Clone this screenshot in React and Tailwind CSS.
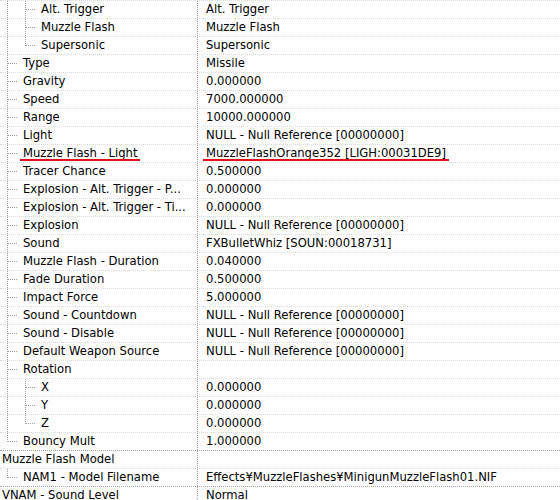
import React from 'react';

// guide codes per depth level: '|' pass-through, '+' tee, 'L' last child
const rows = [
  { name: 'Alt. Trigger', value: 'Alt. Trigger', guides: '|+' },
  { name: 'Muzzle Flash', value: 'Muzzle Flash', guides: '|+' },
  { name: 'Supersonic', value: 'Supersonic', guides: '|L' },
  { name: 'Type', value: 'Missile', guides: '+' },
  { name: 'Gravity', value: '0.000000', guides: '+' },
  { name: 'Speed', value: '7000.000000', guides: '+' },
  { name: 'Range', value: '10000.000000', guides: '+' },
  { name: 'Light', value: 'NULL - Null Reference [00000000]', guides: '+' },
  { name: 'Muzzle Flash - Light', value: 'MuzzleFlashOrange352 [LIGH:00031DE9]', guides: '+', marked: true },
  { name: 'Tracer Chance', value: '0.500000', guides: '+' },
  { name: 'Explosion - Alt. Trigger - P...', value: '0.000000', guides: '+' },
  { name: 'Explosion - Alt. Trigger - Ti...', value: '0.000000', guides: '+' },
  { name: 'Explosion', value: 'NULL - Null Reference [00000000]', guides: '+' },
  { name: 'Sound', value: 'FXBulletWhiz [SOUN:00018731]', guides: '+' },
  { name: 'Muzzle Flash - Duration', value: '0.040000', guides: '+' },
  { name: 'Fade Duration', value: '0.500000', guides: '+' },
  { name: 'Impact Force', value: '5.000000', guides: '+' },
  { name: 'Sound - Countdown', value: 'NULL - Null Reference [00000000]', guides: '+' },
  { name: 'Sound - Disable', value: 'NULL - Null Reference [00000000]', guides: '+' },
  { name: 'Default Weapon Source', value: 'NULL - Null Reference [00000000]', guides: '+' },
  { name: 'Rotation', value: '', guides: '+' },
  { name: 'X', value: '0.000000', guides: '|+' },
  { name: 'Y', value: '0.000000', guides: '|+' },
  { name: 'Z', value: '0.000000', guides: '|L' },
  { name: 'Bouncy Mult', value: '1.000000', guides: 'L' },
  { name: 'Muzzle Flash Model', value: '', guides: '' },
  { name: 'NAM1 - Model Filename', value: 'Effects¥MuzzleFlashes¥MinigunMuzzleFlash01.NIF', guides: 'L' },
  { name: 'VNAM - Sound Level', value: 'Normal', guides: '' },
];

function Guide({ kind }) {
  return (
    <svg width="18" height="17" className="shrink-0 block">
      {kind !== 'L' && <line x1="0.5" y1="0" x2="0.5" y2="17" stroke="#a0a0a0" strokeDasharray="1 1" />}
      {kind === 'L' && <line x1="0.5" y1="0" x2="0.5" y2="9" stroke="#a0a0a0" strokeDasharray="1 1" />}
      {kind !== '|' && <line x1="1" y1="8.5" x2="11" y2="8.5" stroke="#a0a0a0" strokeDasharray="1 1" />}
    </svg>
  );
}

function Marked({ children, className }) {
  return (
    <span className={`relative ${className}`}>
      {children}
      <span className="absolute left-[-3px] right-[-3px] bottom-[-2px] h-[2px] bg-[#e3101b]" />
    </span>
  );
}

export default function App() {
  return (
    <div className="w-[560px] h-[500px] overflow-hidden bg-white text-black text-[11.6px] leading-none" style={{ fontFamily: '"DejaVu Sans", "Noto Sans CJK JP", sans-serif' }}>
      {rows.map((r, i) => {
        const top = r.guides === '';
        return (
          <div
            key={i}
            className={`flex h-[18px] border-t border-dotted ${top ? 'border-[#a8a8a8]' : 'border-[#dcdcdc]'}`}
          >
            <div className={`w-[198px] shrink-0 flex items-center border-r border-dotted border-[#a0a0a0] whitespace-nowrap ${top ? 'pl-[2px]' : 'pl-[7px]'}`}>
              {r.guides.split('').map((g, k) => (
                <Guide key={k} kind={g} />
              ))}
              {r.marked ? (
                <Marked className={top ? '' : 'ml-[-2px]'}>{r.name}</Marked>
              ) : (
                <span className={top ? '' : 'ml-[-2px]'}>{r.name}</span>
              )}
            </div>
            <div className="flex-1 flex items-center pl-[8px] whitespace-nowrap">
              {r.marked ? <Marked>{r.value}</Marked> : r.value}
            </div>
          </div>
        );
      })}
    </div>
  );
}
